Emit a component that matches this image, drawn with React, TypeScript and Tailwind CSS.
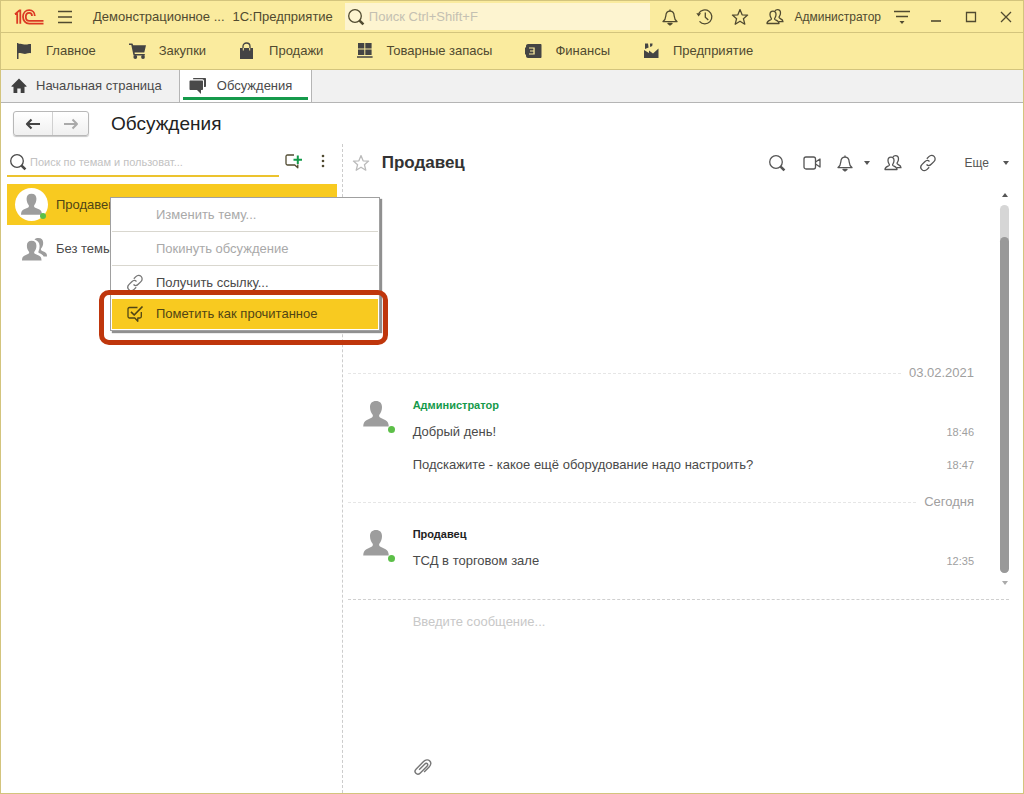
import type { ReactNode } from "react";

type IconProps = { className?: string; children?: ReactNode };

function Line({ className = "size-[18px]", children }: IconProps) {
  return (
    <svg viewBox="0 0 18 18" className={`shrink-0 ${className}`} fill="none" stroke="currentColor" strokeWidth="1.3" strokeLinejoin="round" aria-hidden="true">
      {children}
    </svg>
  );
}

function Solid({ className = "size-[18px]", children }: IconProps) {
  return (
    <svg viewBox="0 0 18 18" className={`shrink-0 ${className}`} fill="currentColor" aria-hidden="true">
      {children}
    </svg>
  );
}

const SearchIcon = () => (
  <Line>
    <circle cx="8" cy="8" r="6.3" />
    <path d="M12.6 12.6l3.8 3.8" strokeWidth="2.6" />
  </Line>
);

const BellIcon = () => (
  <Line>
    <path d="M2 13.6c2-1.4 2.6-3 2.8-5.6C5 4.900 6.600 3.200 9 3.200s4 1.700 4.200 4.800c.2 2.600.8 4.200 2.800 5.600z" />
    <path d="M9 3.200V1.400" />
    <path d="M7 15.400h4l-2 1.600z" fill="currentColor" />
  </Line>
);

const StarIcon = () => (
  <Line>
    <path d="M9 1.600l2.100 5.200 5.500.3-4.200 3.600 1.400 5.500L9 13.200l-4.800 3 1.400-5.500L1.400 7.100l5.500-.3z" />
  </Line>
);

const UsersIcon = () => (
  <Line>
    <path d="M1 15.500c0-2.300 1.600-2.700 3.500-3.500 1.200-.5 1.100-1.300.4-2.300C4.200 8.600 4 7.700 4 6.500 4 4.400 5.200 3.200 7 3.200s3 1.200 3 3.300c0 1.200-.2 2.100-.9 3.200-.7 1-.8 1.800.4 2.300 1.900.8 3.500 1.200 3.500 3.500z" />
    <path d="M9 2.900c.5-.8 1.400-1.300 2.500-1.300 1.800 0 3 1.200 3 3.300 0 1.200-.3 2.100-1 3.200-.7 1-.6 1.800.5 2.300 1.800.8 3 1.200 3 3.300h-4" />
  </Line>
);

const LinkIcon = () => (
  <Line>
    <path d="M7.800 4.700l2.100-2.100c1.600-1.600 3.800-1.600 5.200-.2s1.400 3.600-.2 5.200l-2.700 2.700c-1.400 1.400-3.400 1.500-4.700.3" />
    <path d="M10.200 13.300l-2.100 2.100c-1.600 1.600-3.800 1.600-5.200.2s-1.400-3.600.2-5.200l2.700-2.700c1.400-1.400 3.400-1.500 4.700-.3" />
  </Line>
);

const Person = ({ className = "size-7" }: IconProps) => (
  <svg viewBox="0 0 28 28" className={`shrink-0 ${className}`} fill="#9d9d9d" aria-hidden="true">
    <path d="M14 1c3.800 0 6 2.300 6 6 0 3.200-1 5.800-2.500 7.600-.6.800-.5 2.400.5 2.900l5.600 2.700c2 1 3 2.600 3.200 6.300H1.200c.2-3.700 1.200-5.300 3.200-6.300l5.600-2.700c1-.5 1.100-2.100.5-2.900C9 12.800 8 10.200 8 7c0-3.700 2.200-6 6-6z" />
  </svg>
);

const Caret = () => (
  <svg viewBox="0 0 6 4" className="h-1 w-1.5 shrink-0" fill="currentColor" aria-hidden="true">
    <path d="M0 0h6L3 4z" />
  </svg>
);

const Logo = () => (
  <svg viewBox="0 0 30 16" className="h-4 w-[30px] shrink-0" fill="none" stroke="#dc3a24" strokeWidth="1.800" role="img" aria-label="1С">
    <path d="M1 5.200h2.200v9.600M1 5.200L5.500 1.400h.8v13.400" />
    <path d="M20.800 7c0-3.400-2.300-5.800-5.600-5.800-3.600 0-6.200 2.800-6.200 6.600 0 3.900 2.600 6.800 6.200 6.800h14.300" />
    <path d="M18 7c0-1.900-1.100-3.100-2.800-3.100-2 0-3.400 1.600-3.400 3.900s1.400 4.100 3.400 4.100h14.300" />
  </svg>
);

const sections = [
  { name: "Главное", icon: <Solid><path d="M1 1h1.500v16H1zM2.500 2c3-1 5 .8 7.500.5 2-.3 3-.8 5-.5v9.200c-2-.4-3.200.2-5 .6-2.600.5-4.500-1.400-7.500-.6z" /></Solid> },
  { name: "Закупки", icon: <Solid><path d="M0 1.500h3.400l.8 1.700H17l-1.700 7.300H5.600l.2 1.500h10v1.400H4.500L2.300 3H0z" /><circle cx="6.300" cy="15" r="1.900" /><circle cx="14" cy="15" r="1.900" /></Solid> },
  { name: "Продажи", icon: <Solid><path d="M1 6h13v11H1z" /><path d="M4 8V4.500C4 2.400 5.500 1 7.500 1S11 2.400 11 4.500V8" fill="none" stroke="currentColor" strokeWidth="1.300" /><path d="M4.300 6v2.500M10.700 6v2.500" stroke="#faeb9e" strokeWidth="1" /></Solid> },
  { name: "Товарные запасы", icon: <Solid><path d="M2 1h6.300v5.500H2zM9.300 1h6.300v5.500H9.300zM2 7.500h6.300V13H2zM9.300 7.500h6.300V13H9.300zM1 14.200h15.600v1.600H1z" /></Solid> },
  { name: "Финансы", icon: <Solid><path fillRule="evenodd" d="M3 2h12.500c.6 0 1 .4 1 1v12c0 .6-.4 1-1 1H3c-1.100 0-2-.9-2-2v-1.500H0v-7h1V4c0-1.100.9-2 2-2zM4 5.500v1.100h4.400v1.800H5v1.200h3.400v1.800H4v1.100h5.700v-7z" /></Solid> },
  { name: "Предприятие", icon: <Solid><path d="M1 16V8l5 3V8.500l4 3 5.500-5V16zM2 1.500h3l.6 4L2 7zM7 1.500h2.600L9.200 4 7.100 5z" /></Solid> },
];

type Message = { text: string; time: string };
const history: { date: string; author: string; own: boolean; messages: Message[] }[] = [
  {
    date: "03.02.2021",
    author: "Администратор",
    own: true,
    messages: [
      { text: "Добрый день!", time: "18:46" },
      { text: "Подскажите - какое ещё оборудование надо настроить?", time: "18:47" },
    ],
  },
  { date: "Сегодня", author: "Продавец", own: false, messages: [{ text: "ТСД в торговом зале", time: "12:35" }] },
];

function TitleBar() {
  return (
    <header className="flex h-8 items-center border-b border-[#d3c47d] pl-[13px] pr-2">
      <Logo />
      <button aria-label="Меню" className="ml-3">
        <Line><path d="M2 3.500h14M2 9h14M2 14.500h14" /></Line>
      </button>
      <span className="ml-[19px] whitespace-nowrap">Демонстрационное ...</span>
      <span className="ml-2 whitespace-nowrap">1С:Предприятие</span>
      <label className="ml-3 flex h-[27px] min-w-0 flex-1 items-center gap-1 bg-[#fdf4d0] pl-0.5">
        <SearchIcon />
        <input aria-label="Поиск" placeholder="Поиск Ctrl+Shift+F" className="w-full min-w-0 bg-transparent outline-none placeholder:text-[#c4c0b2]" />
      </label>
      <div className="ml-[11px] flex items-center gap-[17px]">
        <button aria-label="Уведомления"><BellIcon /></button>
        <button aria-label="История">
          <Line>
            <path d="M2.700 5.500A7 7 0 1 1 3.500 13.400M9.300 4.500V9.300l3 2.700" />
            <path d="M.3 5.300h4.800L2.600 8.500z" fill="currentColor" stroke="none" />
          </Line>
        </button>
        <button aria-label="Избранное"><StarIcon /></button>
        <button className="flex items-center gap-2.5 text-xs"><UsersIcon />Администратор</button>
      </div>
      <button aria-label="Настройки" className="ml-3">
        <Line><path d="M1 3.500h16M3 8.500h12" /><path d="M6.500 13h5L9 16z" fill="currentColor" stroke="none" /></Line>
      </button>
      <div className="ml-4 flex items-center gap-[17px]">
        <button aria-label="Свернуть"><Line><path d="M4 13h10" strokeWidth="1.600" /></Line></button>
        <button aria-label="Развернуть"><Line><path d="M4.500 4.500h9v9h-9z" strokeLinejoin="miter" /></Line></button>
        <button aria-label="Закрыть"><Line><path d="M4 4l10 10M14 4L4 14" /></Line></button>
      </div>
    </header>
  );
}

function ContextMenu() {
  return (
    <div role="menu" className="absolute left-[109px] top-[196px] z-20 w-[270px] border border-[#a0a0a0] bg-white p-px shadow-[2px_2px_1px_#909090]">
      <button role="menuitem" disabled className="flex h-8 w-full items-center pl-11 text-[#a9a9a9]">Изменить тему...</button>
      <button role="menuitem" disabled className="flex h-[35px] w-full items-center border-y border-[#d9d7cf] pl-11 text-[#a9a9a9]">Покинуть обсуждение</button>
      <button role="menuitem" className="flex h-[33px] w-full items-center gap-3 pl-3.5 text-[#4a4a4a]">
        <span className="text-[#777]"><LinkIcon /></span>Получить ссылку...
      </button>
      <button role="menuitem" className="flex h-[30px] w-full items-center gap-3 bg-[#f8ca20] pl-3.5 text-[#504515]">
        <Line>
          <path d="M11.500 2.500H3.500c-1 0-1.500.5-1.500 1.500v7.500c0 1 .5 1.500 1.500 1.500h5.300l3 3.300V13h2c1 0 1.500-.5 1.500-1.500V7" />
          <path d="M5 6.800l3.200 3.200L16.500 1.500" strokeWidth="1.700" />
        </Line>
        Пометить как прочитанное
      </button>
    </div>
  );
}

function Sidebar() {
  return (
    <aside className="w-1/3 shrink-0 pl-1.5 pr-[5px]">
      <div className="flex h-[33px] items-center">
        <label className="flex h-full min-w-0 flex-1 items-center gap-[3px] border-b-2 border-[#ecc32e] pt-1 text-[#4a4a4a]">
          <span className="pl-0.5"><SearchIcon /></span>
          <input aria-label="Поиск по темам" placeholder="Поиск по темам и пользоват..." className="w-full min-w-0 text-[11px] outline-none placeholder:text-[#c2c2c2]" />
        </label>
        <button aria-label="Новое обсуждение" className="ml-1.5">
          <Line>
            <path d="M9 3H2.500C1.600 3 1 3.600 1 4.500v7c0 .9.600 1.500 1.500 1.500h7.300l3 2.800V12.500" />
            <path d="M12.800 3.500v8.500M8.500 7.700H17" stroke="#159a4b" strokeWidth="2" />
          </Line>
        </button>
        <button aria-label="Ещё действия" className="ml-[11px] mr-[5px]">
          <Solid><circle cx="9" cy="4" r="1.300" /><circle cx="9" cy="9" r="1.300" /><circle cx="9" cy="14" r="1.300" /></Solid>
        </button>
      </div>
      <ul className="mt-[7px]">
        <li>
          <button className="flex h-[41px] w-full items-center gap-2 bg-[#f8ca20] pl-2 text-[#504515]">
            <span className="relative flex size-[33px] items-center justify-center rounded-full bg-white">
              <Person className="size-[23px]" />
              <span className="absolute bottom-0.5 right-0.5 size-1.5 rounded-full bg-[#5cbf48]" />
            </span>
            Продавец
          </button>
        </li>
        <li>
          <button className="flex h-12 w-full items-center gap-2 pl-3.5 text-[#4a4a4a]">
            <svg viewBox="0 0 28 28" className="size-[27px]" fill="#9d9d9d" aria-hidden="true">
              <path d="M11 5c3.200 0 5 2 5 5 0 2.500-.8 4.500-2 6-.6.700-.5 2 .4 2.400l4.500 2.200c1.500.8 2.300 2 2.400 4.900H1c.1-2.900.900-4.100 2.400-4.900l4.300-2.200c.9-.4 1-1.700.4-2.400-1.200-1.500-2-3.500-2-6 0-3 1.800-5 4.900-5z" />
              <path d="M14 3.500C15 2.500 16.400 2 18 2c3.300 0 5 2 5 5 0 2.400-.8 4.400-2 5.800-.6.800-.4 2 .5 2.400l3 1.500c1.800.9 2.500 2.200 2.500 4.600h-3.500c-.8-1.700-2-2.500-4.300-3.500-1.200-.5-1.500-1-1-2 .9-1.700 1.200-3.700 1-6.300-.2-2.900-2-5-5.200-6z" />
            </svg>
            Без темы
          </button>
        </li>
      </ul>
    </aside>
  );
}

function Chat() {
  return (
    <main className="flex min-w-0 flex-1 flex-col border-l border-dashed border-[#ccc] pl-[5px] pr-3.5">
      <div className="flex h-[37px] items-center pl-1 text-[#555]">
        <button aria-label="В избранное" className="text-[#bbb]"><StarIcon /></button>
        <h2 className="ml-3 flex-1 text-[17px] font-bold text-[#333]">Продавец</h2>
        <div className="flex items-center gap-[17px]">
          <button aria-label="Найти"><SearchIcon /></button>
          <button aria-label="Видеозвонок">
            <Line><rect x="1" y="3" width="11.500" height="12" rx="2" /><path d="M12.500 8l4.500-3v8l-4.500-3" /></Line>
          </button>
          <button aria-label="Оповещения" className="-ml-0.5 -mr-[3px] flex items-center gap-2.5"><BellIcon /><Caret /></button>
          <button aria-label="Участники"><UsersIcon /></button>
          <button aria-label="Ссылка"><LinkIcon /></button>
        </div>
        <button className="ml-7 flex items-center gap-3.5 text-xs">Еще<Caret /></button>
      </div>

      <div className="mt-2 flex min-h-0 flex-1 gap-[26px]">
        <div className="flex flex-1 flex-col justify-end pb-[11px]">
          {history.map((day) => (
            <section key={day.date} className="pb-[11px]">
              <div className="flex h-5 items-center gap-2 text-[#a0a0a0]">
                <hr className="flex-1 border-dashed border-[#e6e6e6]" />
                <time>{day.date}</time>
              </div>
              <div className="flex gap-[18px] pl-[14px] pt-3">
                <span className="relative mt-[5px] h-[33px] w-[33px] shrink-0">
                  <Person />
                  <span className="absolute bottom-0 right-0 size-[7px] rounded-full bg-[#5cbf48]" />
                </span>
                <div className="flex-1">
                  <h3 className={`text-[11px] leading-5 font-bold ${day.own ? "text-[#159a4b]" : "text-[#222]"}`}>{day.author}</h3>
                  {day.messages.map((m) => (
                    <p key={m.time} className="flex h-[33px] items-center justify-between text-[#4a4a4a]">
                      {m.text}
                      <time className="text-[11px] text-[#a0a0a0]">{m.time}</time>
                    </p>
                  ))}
                </div>
              </div>
            </section>
          ))}
        </div>
        <div className="flex w-[9px] flex-col items-center pb-3.5 pt-1 text-[#555]">
          <span className="rotate-180"><Caret /></span>
          <div className="my-2 w-full flex-1 rounded-full bg-[#d6d6d6] pt-8">
            <div className="h-full rounded-full bg-[#999]" />
          </div>
          <span className="text-[#aaa]"><Caret /></span>
        </div>
      </div>

      <div className="flex h-[194px] flex-col items-start border-t border-dashed border-[#d0d0d0] pb-4 pl-[65px] pt-3">
        <textarea aria-label="Сообщение" placeholder="Введите сообщение..." className="w-full flex-1 resize-none outline-none placeholder:text-[#c8c8c8]" />
        <button aria-label="Прикрепить файл" className="text-[#777]">
          <Line className="size-5">
            <path d="M5.500 11.500l5.200-5.200c.8-.8 1.700-.8 2.200-.2s.5 1.400-.3 2.200l-6 6c-1.300 1.300-3 1.400-4 .4s-1-2.700.3-4l6.600-6.600c1.800-1.800 4.200-2 5.600-.6s1.200 3.600-.6 5.400l-4.500 4.500" />
          </Line>
        </button>
      </div>
    </main>
  );
}

export default function App() {
  return (
    <div className="relative flex min-h-screen flex-col border border-[#d3c47d] bg-white font-['Liberation_Sans',Arial,sans-serif] text-[13px] leading-5 text-[#504a30]">
      <div className="bg-[#faeb9e]">
        <TitleBar />
        <nav className="flex h-[37px] items-center gap-[33px] border-b border-[#d3c47d] px-[15px]">
          {sections.map((s) => (
            <a key={s.name} href="#" className="flex items-center gap-3 whitespace-nowrap">
              <span className="text-[#444]">{s.icon}</span>
              {s.name}
            </a>
          ))}
        </nav>
      </div>

      <nav className="flex h-[33px] border-b border-[#b5b5b5] bg-[#f1f1f1] text-[#4a4a4a]">
        <a href="#" className="flex items-center gap-2 pl-[9px] pr-[17px]">
          <Solid><path d="M9 1.500L16.500 9v.8h-2V16H10.700v-4.500H7.300V16H3.500V9.800h-2V9z" fill="#3f3f3f" /></Solid>
          Начальная страница
        </a>
        <a href="#" className="flex items-stretch border-x border-[#b5b5b5] bg-white px-[3px] pb-0.5">
          <span className="flex items-center gap-2.5 border-b-[3px] border-[#159a4b] pl-1.5 pr-4 pt-1">
            <Solid><path d="M5 1h11c.6 0 1 .4 1 1v7c0 .6-.4 1-1 1h-1V4c0-1-.7-1.700-1.700-1.700H4V2c0-.6.400-1 1-1z" /><path d="M1.500 3.500H13c.6 0 1 .4 1 1v7.500c0 .6-.4 1-1 1h-1v4l-4-4H1.500c-.6 0-1-.4-1-1V4.500c0-.6.4-1 1-1z" /></Solid>
            Обсуждения
          </span>
        </a>
      </nav>

      <div className="flex h-[41px] items-center gap-[22px] pl-3">
        <div className="flex h-[25px] rounded-[3px] border border-[#b8b8b8] bg-gradient-to-b from-white to-[#f0f0f0] shadow-[0_1px_1px_#c8c8c8]">
          <button aria-label="Назад" className="flex w-[38px] items-center justify-center text-[#444]">
            <Line><path d="M16 9H3M7.500 4.500L3 9l4.500 4.500" strokeWidth="2.200" /></Line>
          </button>
          <button aria-label="Вперёд" className="flex w-[36px] items-center justify-center border-l border-[#d0d0d0] text-[#aaa]">
            <Line><path d="M2 9h13M10.500 4.500L15 9l-4.500 4.500" strokeWidth="2" /></Line>
          </button>
        </div>
        <h1 className="text-[19px] text-[#222]">Обсуждения</h1>
      </div>

      <div className="flex flex-1">
        <Sidebar />
        <Chat />
      </div>

      <ContextMenu />
      <div className="pointer-events-none absolute left-[98px] top-[289px] z-30 h-[55px] w-[289px] rounded-[10px] border-[5px] border-[#bf360c]" />
    </div>
  );
}
